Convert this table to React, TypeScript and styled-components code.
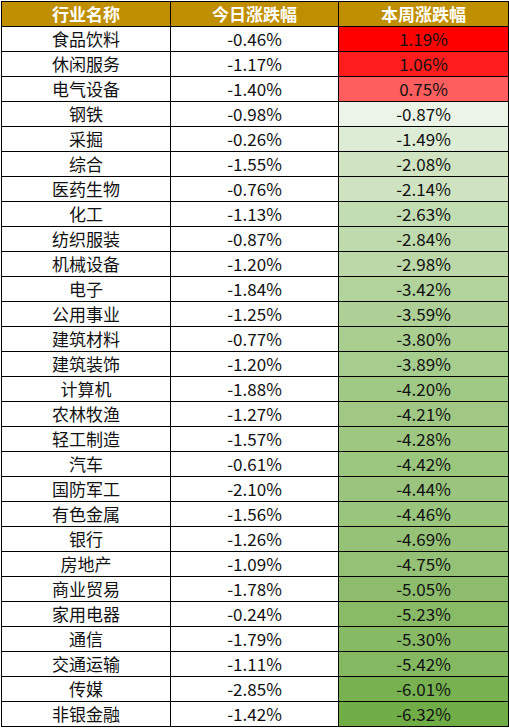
import * as React from 'react'
import styled, { createGlobalStyle } from 'styled-components'

type Row = { name: string; day: number; week: number }

const rows: Row[] = [
  { name: '食品饮料', day: -0.46, week: 1.19 },
  { name: '休闲服务', day: -1.17, week: 1.06 },
  { name: '电气设备', day: -1.4, week: 0.75 },
  { name: '钢铁', day: -0.98, week: -0.87 },
  { name: '采掘', day: -0.26, week: -1.49 },
  { name: '综合', day: -1.55, week: -2.08 },
  { name: '医药生物', day: -0.76, week: -2.14 },
  { name: '化工', day: -1.13, week: -2.63 },
  { name: '纺织服装', day: -0.87, week: -2.84 },
  { name: '机械设备', day: -1.2, week: -2.98 },
  { name: '电子', day: -1.84, week: -3.42 },
  { name: '公用事业', day: -1.25, week: -3.59 },
  { name: '建筑材料', day: -0.77, week: -3.8 },
  { name: '建筑装饰', day: -1.2, week: -3.89 },
  { name: '计算机', day: -1.88, week: -4.2 },
  { name: '农林牧渔', day: -1.27, week: -4.21 },
  { name: '轻工制造', day: -1.57, week: -4.28 },
  { name: '汽车', day: -0.61, week: -4.42 },
  { name: '国防军工', day: -2.1, week: -4.44 },
  { name: '有色金属', day: -1.56, week: -4.46 },
  { name: '银行', day: -1.26, week: -4.69 },
  { name: '房地产', day: -1.09, week: -4.75 },
  { name: '商业贸易', day: -1.78, week: -5.05 },
  { name: '家用电器', day: -0.24, week: -5.23 },
  { name: '通信', day: -1.79, week: -5.3 },
  { name: '交通运输', day: -1.11, week: -5.42 },
  { name: '传媒', day: -2.85, week: -6.01 },
  { name: '非银金融', day: -1.42, week: -6.32 },
]

const maxWeek = Math.max(...rows.map(r => r.week))
const minWeek = Math.min(...rows.map(r => r.week))

// excel style 3-colour scale: red at the top, white at 0, green at the bottom
const scaleColor = (v: number) => {
  const mix = (from: number[], to: number[], t: number) =>
    `rgb(${from.map((c, i) => Math.round(c + (to[i] - c) * t)).join(',')})`
  if (v >= 0) return mix([255, 255, 255], [255, 0, 0], v / maxWeek)
  return mix([255, 255, 255], [112, 173, 71], v / minWeek)
}

const pct = (v: number) => `${v.toFixed(2)}%`

const GlobalStyle = createGlobalStyle`
  body {
    margin: 0;
    background: #fff;
    font-family: "Noto Sans CJK SC", "Noto Sans", sans-serif;
  }
`

const Table = styled.table`
  margin: 1px 0 0 1px;
  width: 507px;
  border-collapse: collapse;
  table-layout: fixed;
`

const Col = styled.col<{ $w: number }>`
  width: ${p => p.$w}px;
`

const HeadCell = styled.th`
  height: 24px;
  padding: 0;
  border: 1px solid #000;
  background: #bf8f00;
  color: #fff;
  font-size: 17px;
  font-weight: 700;
  line-height: 22px;
  text-align: center;
`

const Cell = styled.td`
  height: 24px;
  padding: 0;
  border: 1px solid #000;
  color: #111;
  font-size: 17px;
  line-height: 22px;
  text-align: center;
  white-space: nowrap;
`

const App: React.FC = () => (
  <>
    <GlobalStyle />
    <Table>
      <colgroup>
        <Col $w={169} />
        <Col $w={168} />
        <Col $w={170} />
      </colgroup>
      <thead>
        <tr>
          <HeadCell>行业名称</HeadCell>
          <HeadCell>今日涨跌幅</HeadCell>
          <HeadCell>本周涨跌幅</HeadCell>
        </tr>
      </thead>
      <tbody>
        {rows.map(r => (
          <tr key={r.name}>
            <Cell>{r.name}</Cell>
            <Cell>{pct(r.day)}</Cell>
            <Cell style={{ background: scaleColor(r.week) }}>{pct(r.week)}</Cell>
          </tr>
        ))}
      </tbody>
    </Table>
  </>
)

export default App
